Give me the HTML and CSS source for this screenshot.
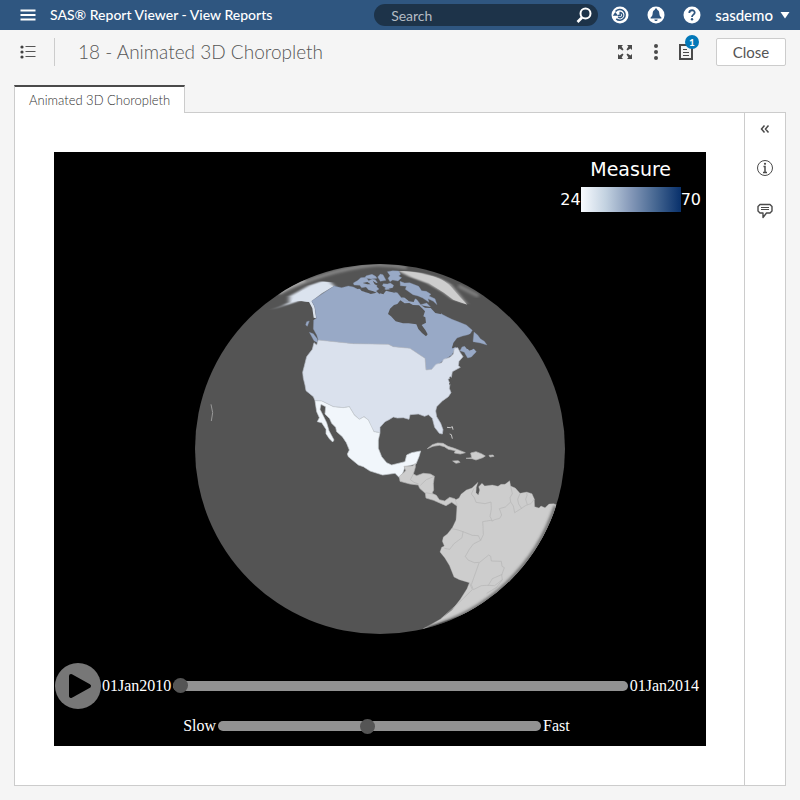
FILE: index.html
```html
<!DOCTYPE html>
<html lang="en">
<head>
<meta charset="utf-8">
<title>SAS Report Viewer - View Reports</title>
<meta name="viewport" content="width=device-width, initial-scale=1">
<link rel="stylesheet" href="styles.css">
</head>
<body>
<header class="banner">
  <button class="icon-btn menu-btn" aria-label="Menu">
    <svg width="16" height="12" viewBox="0 0 16 12"><path d="M0.500 1.500h15M0.500 6h15M0.500 10.500h15" stroke="#fff" stroke-width="2"/></svg>
  </button>
  <h1 class="app-title">SAS® Report Viewer - View Reports</h1>
  <form class="search">
    <input class="search-input" type="search" placeholder="Search" aria-label="Search">
    <button class="icon-btn" type="button" aria-label="Run search">
      <svg width="16" height="16" viewBox="0 0 16 16" fill="none" stroke="#fff"><circle cx="9.500" cy="6.500" r="5" stroke-width="2"/><path d="M6 10.500L1.500 15" stroke-width="2.600"/></svg>
    </button>
  </form>
  <nav class="banner-actions">
    <button class="icon-btn" aria-label="Recent">
      <svg width="18" height="18" viewBox="0 0 18 18"><circle cx="9" cy="9" r="8.500" fill="#fff"/><g fill="none" stroke="#2f5680" stroke-width="1.500"><path d="M4.500 5.500A5.400 5.400 0 1 1 5.200 12.900"/><path d="M9.200 5.800v3.700H6.800M9.200 6.600a2.600 2.600 0 1 1-2 4.400"/></g><path d="M1.800 9.800h5.200L4.300 6z" fill="#2f5680"/></svg>
    </button>
    <button class="icon-btn" aria-label="Notifications">
      <svg width="18" height="18" viewBox="0 0 18 18"><circle cx="9" cy="9" r="8.500" fill="#fff"/><path d="M9 2.500c1 0 1.200.600 1.200 1.200 1.700.600 2 2.300 2.200 4.300.200 1.700.800 2.600 2 3.500v1H3.600v-1c1.200-.900 1.800-1.800 2-3.500.200-2 .500-3.700 2.200-4.300 0-.600.200-1.200 1.200-1.200zM7.300 13.500h3.400c-.300 2-3.100 2-3.400 0z" fill="#2f5680"/></svg>
    </button>
    <button class="icon-btn" aria-label="Help">
      <svg width="18" height="18" viewBox="0 0 18 18"><circle cx="9" cy="9" r="8.500" fill="#fff"/><path d="M6.300 7c0-3.700 5.600-3.500 5.400-.300C11.600 8.700 9 8.700 9 11" fill="none" stroke="#2f5680" stroke-width="1.800"/><circle cx="9" cy="13.300" r="1.200" fill="#2f5680"/></svg>
    </button>
    <button class="icon-btn user-btn">sasdemo
      <svg width="10" height="8" viewBox="0 0 10 8"><path d="M0.500 1h9L5 7.500z" fill="#fff"/></svg>
    </button>
  </nav>
</header>

<div class="toolbar">
  <button class="icon-btn list-btn" aria-label="Report list">
    <svg width="16" height="14" viewBox="0 0 16 14"><g fill="#404040"><circle cx="2" cy="2" r="1.600"/><circle cx="2" cy="7" r="1.600"/><circle cx="2" cy="12" r="1.600"/></g><path d="M5.500 1.500h10M5.500 6.500h10M5.500 11.500h10" stroke="#555"/></svg>
  </button>
  <h2 class="report-title">18 - Animated 3D Choropleth</h2>
  <div class="tools">
    <button class="icon-btn" aria-label="Maximize">
      <svg width="16" height="16" viewBox="0 0 16 16"><path d="M1 1h5L4.600 2.600 6.500 5.500 5.500 6.500 2.600 4.600 1 6zM15 1v5l-1.600-1.400L10.500 6.500 9.500 5.500l1.900-2.900L10 1zM1 15v-5l1.600 1.400L5.500 9.500 6.500 10.500l-1.900 2.900L6 15zM15 15h-5l1.400-1.600L9.500 10.500 10.500 9.500l2.900 1.900L15 10z" fill="#4a4a4a"/></svg>
    </button>
    <button class="icon-btn" aria-label="More">
      <svg width="6" height="18" viewBox="0 0 6 18" fill="#4a4a4a"><circle cx="3" cy="3" r="2"/><circle cx="3" cy="9" r="2"/><circle cx="3" cy="15" r="2"/></svg>
    </button>
    <button class="icon-btn notes-btn" aria-label="Report notes">
      <svg width="16" height="18" viewBox="0 0 16 18" fill="none" stroke="#4a4a4a"><path d="M2 2h12v14H2z" stroke-width="2"/><path d="M5 6.500h4M5 9.500h6M5 12.500h6"/></svg>
      <span class="badge">1</span>
    </button>
    <button class="close-btn">Close</button>
  </div>
</div>

<main class="report">
  <nav class="tabs"><a class="tab" href="#page">Animated 3D Choropleth</a></nav>
  <div class="panel" id="page">
    <section class="stage" aria-label="Animated 3D Choropleth">
      <div class="legend">
        <p class="legend-title">Measure</p>
        <div class="legend-scale"><span>24</span><i class="ramp"></i><span>70</span></div>
      </div>
      <svg class="globe" viewBox="582 789 1116 1116" role="img" aria-label="Globe">
        <defs>
          <clipPath id="disc"><circle cx="1140" cy="1347" r="555"/></clipPath>
          <filter id="haze" x="-10%" y="-20%" width="120%" height="140%"><feGaussianBlur stdDeviation="4"/></filter>
          <filter id="soft" x="-10%" y="-20%" width="120%" height="140%"><feGaussianBlur stdDeviation="7 2"/></filter>
        </defs>
        <circle cx="1140" cy="1347" r="555" fill="#545454"/>
        <g clip-path="url(#disc)" stroke-linejoin="round">
          <g transform="translate(1110 765)">
            <path d="M-275 115Q-130 45 10 30 60 28 110 38" fill="none" stroke="#9a9a9a" stroke-width="7" filter="url(#haze)"/>
            <path d="M-272 112Q-235 88 -195 75" fill="none" stroke="#ddd" stroke-width="7" filter="url(#haze)"/>
            <path d="M85 48C140 46 205 62 240 88L265 117 290 148 250 134 222 113 175 86 120 66Z" fill="#cdcdcd" filter="url(#soft)"/>
            <path d="M160 60C195 62 222 74 243 95L265 121 292 149 250 134 222 113 180 86Z" fill="#cdcdcd"/>
            <path d="M265 93L325 123" stroke="#8a8a8a" stroke-width="8" filter="url(#haze)"/>
            <path d="M-297 165L-262 152-243 142-242 124-213 108-185 92-145 79-118 82-108 92-145 115-175 138-183 141-210 137-240 147Z" fill="#dbe3ee" filter="url(#soft)"/>
            <path d="M-236 140L-225 122-205 108-180 98-145 88-108 93-145 115-175 138-166 155-161 190-169 188-173 160-183 141-210 137Z" fill="#dbe3ee"/>
            <!-- Canada -->
            <g fill="#98a9c6" stroke="#8796b1" stroke-width="1">
              <path d="M-175 138L-108 93-85 98-65 93-50 96-38 102-25 102-14 112 2 114 14 104 28 117 40 106 52 94 64 110 82 113 94 128 112 121 130 128 141 134 152 149 170 144 184 158 201 161 216 178 232 186 246 193 269 202 289 210 307 226 300 238 278 243 261 249 250 264 246 280 258 276 253 286 245 300 215 320 185 343 168 345 165 310 150 300 120 280 70 275 55 268-50 266-155 255-160 240-170 222-169 195-161 190-166 155Z"/>
              <path d="M286 273L276 276 270 287 283 292 287 299 293 309 304 306 319 290 311 281 298 287Z"/>
              <path d="M312 231L323 240 331 251 343 259 351 270 331 264 309 260Z"/>
              <path d="M90 79L104 84 119 83 146 94 155 107 169 109 183 118 177 123 195 131 201 149 190 139 174 131 177 142 158 129 144 123 129 119 106 103 109 94 91 92Z"/>
              <path d="M-50 84L-36 76-28 68-12 67-4 77 7 72 16 74 25 86 20 95 27 102 14 111-4 105-12 96-25 98-31 91-48 90ZM-11 62L6 58 17 64 21 70 3 72-17 69ZM23 66L31 57 39 59 44 68 48 76 31 79ZM40 86L52 87 61 84 71 91 68 98 52 101 37 92ZM52 50L68 47 86 48 92 58 86 63 95 68 84 78 68 75 60 80 54 70 60 62ZM104 118L121 121 127 135 111 140 98 132Z"/>
              <path d="M-190 200L-182 198-188 214-193 210ZM-182 232L-170 236-158 252-156 264-168 257Z"/>
            </g>
            <g fill="#545454">
              <path d="M91 136L104 145 118 144 129 150 147 151 158 161 165 169 160 184 166 187 168 203 155 210 166 225 173 238 168 244 156 234 145 222 139 208 116 205 99 205 77 199 63 184 54 177 60 161 72 150 82 147Z"/>
              <path d="M103 109L117 116 137 127 131 141 117 139 104 128 93 126ZM153 151L181 156 198 156 212 167 214 178 196 174 182 159 165 158Z"/>
              <path d="M-30 102L-20 100-8 106 8 108 20 113 2 117-10 112-25 108ZM8 77L19 84 30 80 26 88 33 96 24 93 14 88ZM34 98L48 104 62 103 76 113 60 110 48 107 40 118 28 114 38 106ZM66 82L82 84 88 94 76 92ZM-22 84L-8 81 2 88-8 88Z"/>
              <path d="M246 280L252 262 263 251 287 246 303 235 298 248 309 263 315 278 303 285 290 281 282 271 272 260 259 262 252 278Z"/>
            </g>
          </g>
          <g transform="translate(870 1020)">
            <path d="M85 0L190 11 295 13 310 20 360 25 390 45 405 55 408 90 425 88 438 73 455 68 461 58 480 52 490 42 493 25 503 23 511 38 519 50 507 64 505 77 511 82 487 95 484 112 474 118 480 132 478 145 483 158 475 170 457 183 440 200 437 213 440 230 452 250 459 269 457 282 448 280 434 262 427 235 415 224 404 229 385 222 360 224 357 238 340 233 322 234 310 231 297 239 285 245 270 262 270 278 252 275 242 258 235 240 222 230 208 238 193 225 178 200 160 203 130 200 95 183 75 182 70 170 48 152 45 135 40 115 38 97 43 78 50 50 67 28 72 8 80 15Z" fill="#dae1ed" stroke="#b9c0ca" stroke-width="2"/>
            <path d="M480 110L485 125 478 133" fill="none" stroke="#545454" stroke-width="4"/>
            <path d="M75 182L95 183 130 200 160 203 178 200 193 225 208 238 222 230 235 240 252 275 270 278 265 300 265 325 275 350 290 368 305 375 345 365 350 345 365 338 392 333 387 350 378 372 345 380 340 395 330 415 315 400 300 402 278 405 240 393 220 380 205 375 175 350 172 342 178 330 169 308 157 290 140 275 137 262 125 250 119 236 105 222 107 200 93 193 90 208 99 226 110 248 117 272 132 300 128 306 118 296 108 281 108 268 95 248 82 245 88 233 80 215Z" fill="#f1f6fb" stroke="#c6cbd0" stroke-width="2"/>
          </g>
          <g transform="translate(1170 1020)" fill="#cdcdcd" stroke="#b4b4b4" stroke-width="2">
            <path d="M42 379L68 378 76 370 76 382 70 402 80 407 100 400 121 402 133 409 130 431 131 450 126 460 139 466 148 479 164 483 179 472 194 476 203 484 201 498 185 487 168 497 154 491 131 481 108 474 106 460 89 445 85 435 60 432 30 424 28 409 40 399 47 392Z"/>
            <path d="M70 402L61 419 72 427 86 432M133 409L109 419 91 436M106 458L129 462" fill="none"/>
            <path d="M112 326L127 314 143 309 159 310 174 319 193 325 211 332 226 338 211 342 193 339 196 332 175 328 163 320 148 316 129 319ZM228 355L245 353 242 339 258 335 274 341 286 348 278 353 258 360 246 356ZM188 363L205 362 210 367 198 370ZM297 346L309 345 312 349 300 351Z"/>
            <path d="M171 262L181 263 187 260 189 269M179 282L184 284 187 296" fill="none" stroke="#c8c8c8" stroke-width="3"/>
          </g>
          <g transform="translate(1230 1410)">
            <path d="M136 90L147 84 153 73 169 60 186 54 204 37 199 52 198 68 205 75 209 60 206 50 216 40 224 48 247 45 264 49 273 43 285 43 299 32 302 48 316 54 330 70 350 66 366 71 373 87 374 110 387 114 393 108 405 113 417 102 431 101 455 110 400 230 295 350 170 430 40 476 92 447 126 420 151 388 171 356 178 338 148 329 132 321 118 286 104 263 90 246 95 232 103 228 97 214 100 201 112 192 127 173 138 150 140 122 141 103Z" fill="#cdcdcd" stroke="#b4b4b4" stroke-width="1"/>
            <path d="M192 55L184 72 193 83 198 97 225 101 243 96 244 117 240 139 247 153 242 151 218 155 219 170 220 194 212 211 205 197 187 196 159 185 141 179 125 176M159 185L156 203 132 221 119 238 103 235M212 211L190 222 178 238 166 259 174 270 193 278 209 277 236 255 242 259 244 273 274 274 276 289 283 293 275 315 277 329 254 347 232 346 214 347 190 359 184 344 207 279M178 338L187 359 150 395 92 447M247 153L254 149 269 145 275 135 268 116 286 111 302 96 300 83 307 71 302 48M302 96L310 108 314 128 330 118 348 106 363 101 373 87M330 70L323 88 326 102 335 116M350 66L351 76 347 88 352 104M277 313L247 326 235 346M277 329L260 352 230 370" fill="none" stroke="#b5b5b5" stroke-width="2"/>
            <path d="M436 108A555 555 0 0 1 50 474" fill="none" stroke="#545454" stroke-width="8" filter="url(#haze)"/>
          </g>
          <path d="M633 1213L638 1238 634 1263" fill="none" stroke="#999" stroke-width="3"/>
        </g>
      </svg>
      <div class="controls">
        <div class="timeline">
          <button class="play" aria-label="Play">
            <svg width="48" height="48" viewBox="0 0 48 48"><circle cx="24" cy="24" r="23" fill="#777"/><path d="M17 14L35 24 17 34z" stroke="#000" stroke-width="4" stroke-linejoin="round"/></svg>
          </button>
          <label for="date">01Jan2010</label>
          <input class="slider" id="date" type="range" min="2010" max="2014" value="2010">
          <span>01Jan2014</span>
        </div>
        <div class="speed">
          <label for="speed">Slow</label>
          <input class="slider" id="speed" type="range" min="0" max="100" value="46">
          <span>Fast</span>
        </div>
      </div>
    </section>
    <aside class="rail">
      <button class="icon-btn" aria-label="Expand">
        <svg width="10" height="10" viewBox="0 0 10 10" fill="none" stroke="#4a4a4a" stroke-width="1.500"><path d="M4.500 1.500L1.500 5l3 3.500M8.500 1.500L5.500 5l3 3.500"/></svg>
      </button>
      <button class="icon-btn" aria-label="Details">
        <svg width="18" height="18" viewBox="0 0 18 18"><circle cx="9" cy="9" r="7.500" fill="none" stroke="#4a4a4a"/><path d="M7.500 7.500H9V13M7 13.500h4" fill="none" stroke="#4a4a4a" stroke-width="1.500"/><circle cx="9" cy="4.800" r="1.100" fill="#4a4a4a"/></svg>
      </button>
      <button class="icon-btn" aria-label="Comments">
        <svg width="18" height="18" viewBox="0 0 18 18" fill="none" stroke="#4a4a4a"><path d="M4 2.500h10l2 2v4.500l-2 2H10.500L7 15.500V11H4L2 9V4.500z" stroke-width="1.400" stroke-linejoin="round"/><path d="M5 5.500h8M5 7.500h8"/></svg>
      </button>
    </aside>
  </div>
</main>
</body>
</html>
```
FILE: styles.css
```css
* { box-sizing: border-box; }

body {
  margin: 0;
  min-height: 100vh;
  display: flex;
  flex-direction: column;
  background: #f5f5f5;
  color: #555;
  font-family: Lato, sans-serif;
  font-size: 14px;
}

button, input { font: inherit; color: inherit; }
h1, h2, p { margin: 0; font-weight: 400; }
svg { display: block; }

.icon-btn {
  display: flex;
  align-items: center;
  padding: 0;
  border: 0;
  background: none;
}

.banner {
  display: flex;
  align-items: center;
  height: 30px;
  padding: 0 10px 0 20px;
  background: #2f5680;
  color: #fff;
}
.menu-btn { margin-right: 14px; }
.app-title { flex: 1; font-size: 14px; line-height: 28px; font-weight: 500; white-space: nowrap; }

.search {
  display: flex;
  align-items: center;
  width: 224px;
  height: 22px;
  margin-right: 13px;
  padding: 0 6px 0 17px;
  border-radius: 11px;
  background: #1d3349;
}
.search-input {
  flex: 1;
  min-width: 0;
  height: 22px;
  padding: 0;
  border: 0;
  outline: 0;
  background: none;
  color: #fff;
}
.search-input::placeholder { color: #b4bcc4; opacity: 1; }

.banner-actions { display: flex; align-items: center; gap: 18px; }
.user-btn { gap: 7px; margin-left: -4px; font-size: 15px; font-weight: 500; line-height: 28px; }

.toolbar {
  display: flex;
  align-items: center;
  height: 44px;
  padding: 0 14px 0 20px;
}
.list-btn { height: 28px; padding-right: 18px; border-right: 1px solid #ccc; }
.report-title { margin-left: 23px; font-size: 19px; line-height: 24px; font-weight: 300; white-space: nowrap; }
.tools { display: flex; align-items: center; gap: 20px; margin-left: auto; }
.notes-btn { position: relative; margin: 0 2px 0 -1px; }
.badge {
  position: absolute;
  top: -8px;
  left: 7px;
  width: 14px;
  height: 14px;
  border-radius: 7px;
  background: #0378b8;
  color: #fff;
  font-size: 10px;
  line-height: 14px;
  font-weight: 700;
  text-align: center;
}
.close-btn {
  width: 70px;
  height: 28px;
  padding: 0;
  border: 1px solid #ccc;
  border-radius: 2px;
  background: #fff;
  font-size: 15px;
}

.report {
  flex: 1;
  display: flex;
  flex-direction: column;
  padding: 11px 14px 14px;
}
.tabs { display: flex; }
.tab {
  height: 28px;
  margin-bottom: -1px;
  padding: 0 14px;
  border: 1px solid #ccc;
  border-top: 2px solid #4a4a4a;
  border-bottom: 0;
  background: #fff;
  color: #333;
  font-size: 13px;
  font-weight: 300;
  line-height: 26px;
  text-decoration: none;
  z-index: 1;
}
.panel { flex: 1; display: flex; border: 1px solid #ccc; background: #fff; }

.stage {
  flex: 1;
  display: grid;
  grid-template-rows: 85px 1fr 85px;
  margin: 39px 38px 39px 39px;
  background: #000;
  color: #fff;
  font-family: "Liberation Serif", serif;
  font-size: 16px;
}
.legend {
  justify-self: end;
  padding: 5px 5px 0 0;
  font-family: "DejaVu Sans", sans-serif;
  text-align: center;
}
.legend-title { font-size: 19px; line-height: 24px; }
.legend-scale { display: flex; align-items: center; margin-top: 6px; }
.ramp {
  width: 100px;
  height: 25px;
  background: linear-gradient(to right, #f8fbff, #c2d1e0 25%, #8498b8 50%, #456691 75%, #08306b);
}
.globe { place-self: center; width: 372px; max-width: 100%; }

.timeline { display: flex; align-items: center; height: 49px; padding-right: 7px; }
.play { padding: 0; border: 0; background: none; }
.speed { display: flex; align-items: center; justify-content: center; height: 32px; padding-right: 7px; }
.slider {
  appearance: none;
  height: 10px;
  margin: 0 2px;
  border-radius: 5px;
  background: #929292;
}
.slider::-webkit-slider-thumb {
  appearance: none;
  width: 15px;
  height: 15px;
  border-radius: 50%;
  background: #555;
}
.timeline .slider { flex: 1; min-width: 0; }
.speed .slider { width: 323px; }

.rail {
  display: flex;
  flex-direction: column;
  align-items: center;
  gap: 25px;
  width: 41px;
  padding-top: 11px;
  border-left: 1px solid #ccc;
}
```
